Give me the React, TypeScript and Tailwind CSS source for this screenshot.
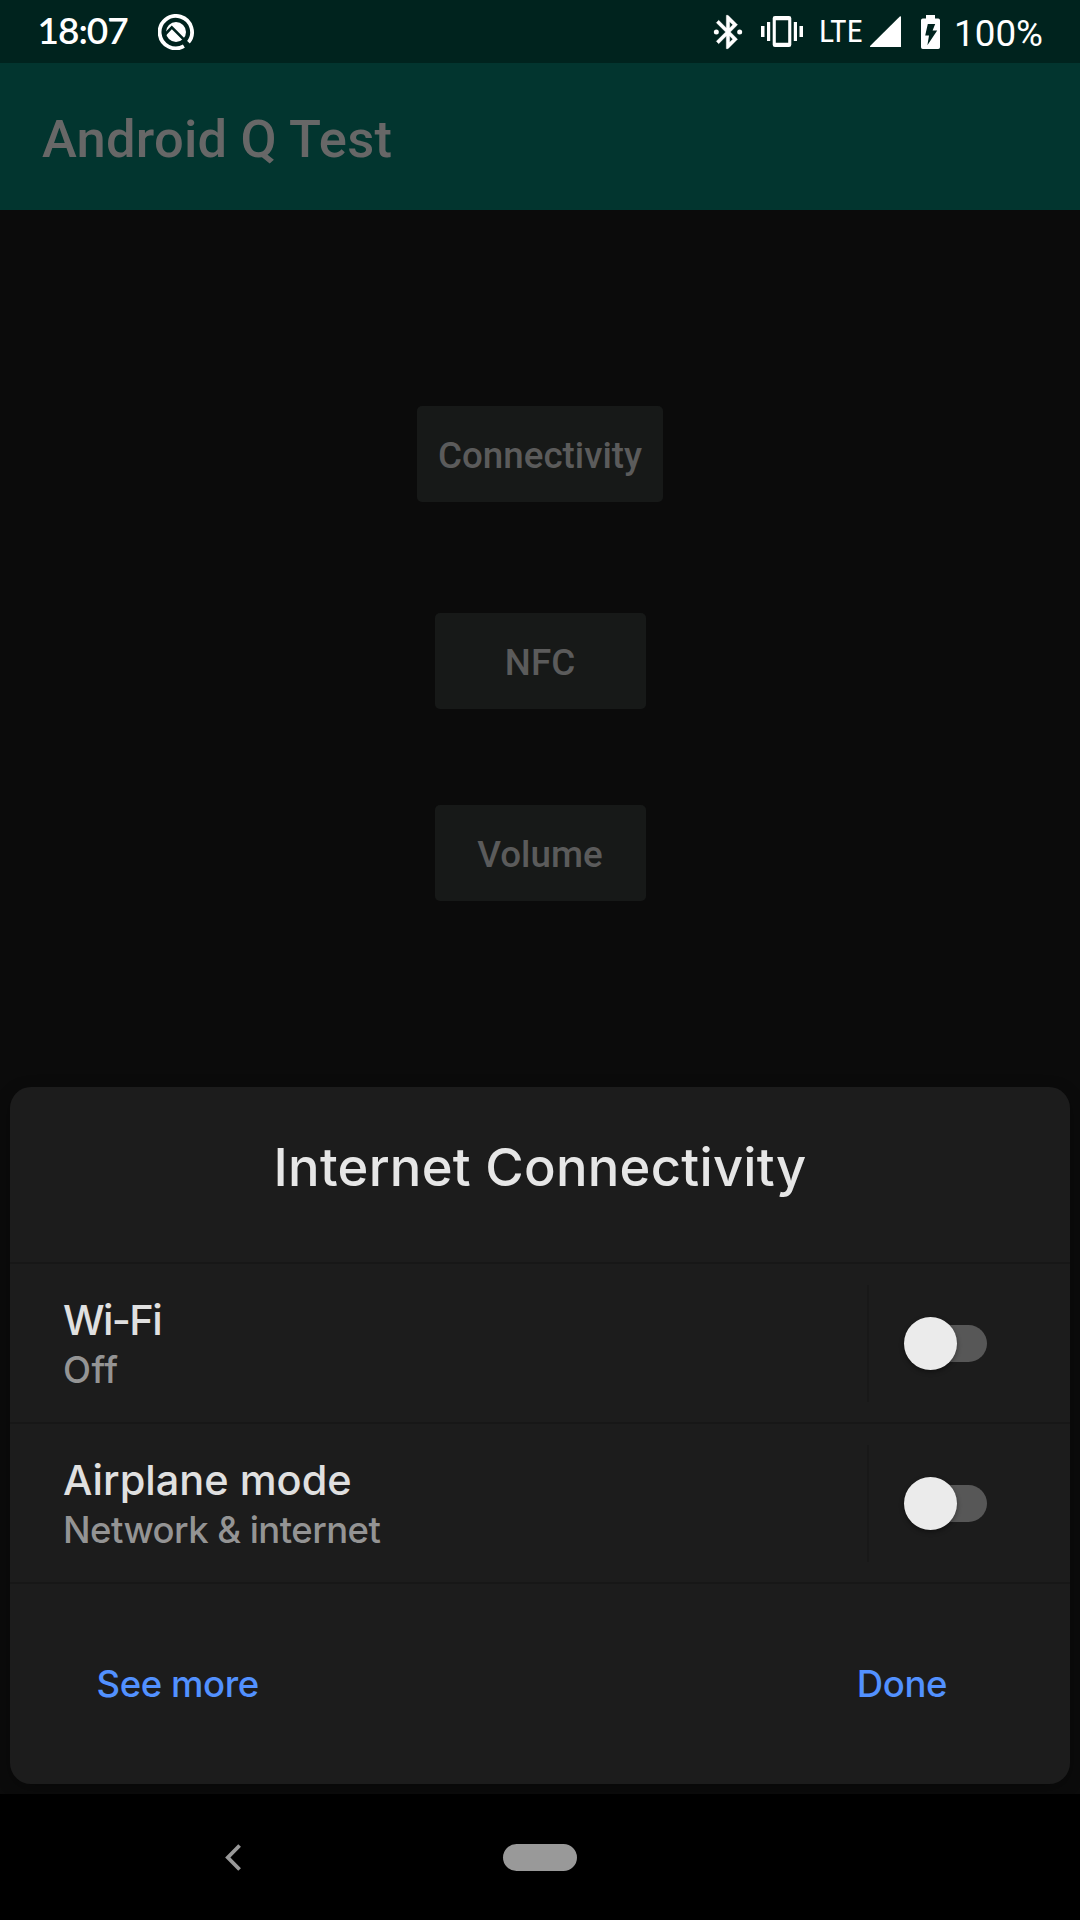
import React from "react";

function BetaIcon() {
  return (
    <svg className="ml-[29.5px] h-9 w-9" viewBox="0 0 36 36" fill="none">
      <path d="M30.2 28.6A16.2 16.2 0 1 0 25.9 32.2" stroke="#fff" strokeWidth="3.8" />
      <circle cx="18" cy="18" r="10" fill="#fff" />
      <path d="M6.5 21L13.8 13.4L31 30.6" stroke="#00231e" strokeWidth="2.7" />
    </svg>
  );
}

function BluetoothIcon() {
  return (
    <svg className="h-10 w-10" viewBox="0 0 24 24" fill="#fff">
      <path
        d="M17.71 7.71L12 2h-1v7.59L6.41 5 5 6.41 10.59 12 5 17.59 6.41 19 11 14.41V22h1l5.71-5.71-4.3-4.29 4.3-4.29zM13 5.83l1.88 1.88L13 9.59V5.83zm1.88 10.46L13 18.17v-3.76l1.88 1.88z"
        stroke="#fff"
        strokeWidth="0.25"
        strokeLinejoin="round"
      />
      <circle cx="5" cy="12" r="1.5" />
      <circle cx="19" cy="12" r="1.5" />
    </svg>
  );
}

function VibrateIcon() {
  return (
    <svg className="ml-[13px] h-8 w-[42px]" viewBox="0 0 42 32" fill="#fff">
      <rect x="0" y="10" width="3.5" height="11" />
      <rect x="6" y="6" width="3.2" height="19" />
      <rect x="32.8" y="6" width="3.2" height="19" />
      <rect x="38.5" y="10" width="3.5" height="11" />
      <path
        fillRule="evenodd"
        d="M14 0h14a2.3 2.3 0 0 1 2.3 2.3v26.4a2.3 2.3 0 0 1-2.3 2.3H14a2.3 2.3 0 0 1-2.3-2.3V2.3A2.3 2.3 0 0 1 14 0zM14.8 4.2v22.6h12.4V4.2z"
      />
    </svg>
  );
}

function StatusBar() {
  return (
    <header className="flex h-[63px] items-center bg-[#00231e] pl-[37.5px] text-white">
      <span className="w-[91px] pb-[3px] font-['Lato',sans-serif] text-[37px] leading-[48px] font-semibold tracking-[-1px]">
        18:07
      </span>
      <BetaIcon />
      <div className="ml-auto flex h-full items-center pr-[38px]">
        <BluetoothIcon />
        <VibrateIcon />
        <span className="ml-4 w-[43px] pb-px font-['Roboto_Condensed','Roboto',sans-serif] text-[32px] leading-[40px]">
          LTE
        </span>
        <svg className="ml-2 h-[31px] w-[31px]" viewBox="0 0 31 31" fill="#fff">
          <path d="M31 .8V31H.8C0 31-.2 30.4.3 29.8L29.8.4C30.4-.1 31 .2 31 .8z" />
        </svg>
        <svg className="ml-5 h-[34px] w-[19px]" viewBox="0 0 19 34" fill="#fff">
          <path d="M5 0h9v3.5h3.2A1.8 1.8 0 0 1 19 5.3v26.9a1.8 1.8 0 0 1-1.8 1.8H1.8A1.8 1.8 0 0 1 0 32.2V5.3A1.8 1.8 0 0 1 1.8 3.5H5z" />
          <path d="M6.8 9h7.4l-2.6 6.6h4.6L6.4 30.2l1.6-9.8H4.2z" fill="#00231e" />
        </svg>
        <span className="-mr-px ml-[14px] pt-[4px] font-['Roboto',sans-serif] text-[36.75px] leading-[44px]">
          100%
        </span>
      </div>
    </header>
  );
}

function DemoButton({ label, className }: { label: string; className: string }) {
  return (
    <button
      className={`flex h-24 items-center justify-center rounded-[5px] bg-[#171918] pt-[3px] text-[36.75px] leading-[44px] font-medium text-[#5b5b5b] ${className}`}
    >
      {label}
    </button>
  );
}

function Toggle() {
  return (
    <div className="flex h-[54px] items-center">
      <span className="z-10 h-[53px] w-[53px] rounded-full bg-[#ebebeb] shadow-[0_2px_5px_rgba(0,0,0,0.4)]" />
      <span className="-ml-[45px] h-[37px] w-[75px] rounded-full bg-[#575757]" />
    </div>
  );
}

function SettingRow({ title, summary, titleClass, summaryClass }: {
  title: string;
  summary: string;
  titleClass: string;
  summaryClass: string;
}) {
  return (
    <div className="flex h-40 border-t-2 border-[#171717]">
      <div className="flex flex-1 flex-col pt-[31px] pl-[53px]">
        <span className={`text-[41.5px] leading-[50px] font-medium text-[#e0e0e0] ${titleClass}`}>{title}</span>
        <span className={`mt-0.5 text-[36.5px] leading-[46px] font-medium text-[#949494] ${summaryClass}`}>{summary}</span>
      </div>
      <div className="mt-[21px] flex h-[117px] w-[203px] items-center border-l-2 border-[#181818] pl-[35px]">
        <Toggle />
      </div>
    </div>
  );
}

export default function App() {
  return (
    <div className="flex h-[1920px] w-[1080px] flex-col overflow-hidden bg-[#0b0b0b]">
      <StatusBar />
      <div className="flex h-[147px] items-center bg-[#02352f] pt-[5px] pl-[42px] font-['Roboto',sans-serif] text-[52.5px] leading-[62px] font-medium tracking-[0.22px] text-[#676767]">
        Android Q Test
      </div>
      <main className="flex h-[877px] flex-col items-center pt-[196px] font-['Roboto',sans-serif]">
        <DemoButton label="Connectivity" className="w-[246px]" />
        <DemoButton label="NFC" className="mt-[111px] w-[211px]" />
        <DemoButton label="Volume" className="mt-24 w-[211px]" />
      </main>
      <section className="mx-[10px] flex h-[697px] flex-col rounded-[21px] bg-[#1c1c1c] font-['Inter',sans-serif] shadow-[0_4px_16px_rgba(0,0,0,0.3)]">
        <h1 className="flex h-[175px] items-center justify-center pb-[15px] text-[52.5px] leading-[64px] font-medium tracking-[0.26px] text-[#e6e6e6]">
          Internet Connectivity
        </h1>
        <SettingRow title="Wi-Fi" summary="Off" titleClass="tracking-[-1.65px]" summaryClass="tracking-[0.5px]" />
        <SettingRow
          title="Airplane mode"
          summary="Network & internet"
          titleClass="tracking-normal"
          summaryClass="tracking-[-0.55px]"
        />
        <div className="flex flex-1 items-center justify-between border-t-2 border-[#171717] pr-[123px] pl-[86.5px] text-[36.5px] leading-[46px] font-medium tracking-[-0.4px] text-[#5291ff]">
          <button>See more</button>
          <button>Done</button>
        </div>
      </section>
      <nav className="z-10 mt-[10px] flex h-[126px] items-center bg-black pl-[225px]">
        <svg className="h-[27px] w-4" viewBox="0 0 16 27" fill="none" stroke="#999" strokeWidth="3.8">
          <path d="M14.6 1.5L2.8 13.5L14.6 25.5" />
        </svg>
        <span className="ml-[262px] h-[27px] w-[74px] rounded-full bg-[#999]" />
      </nav>
    </div>
  );
}
